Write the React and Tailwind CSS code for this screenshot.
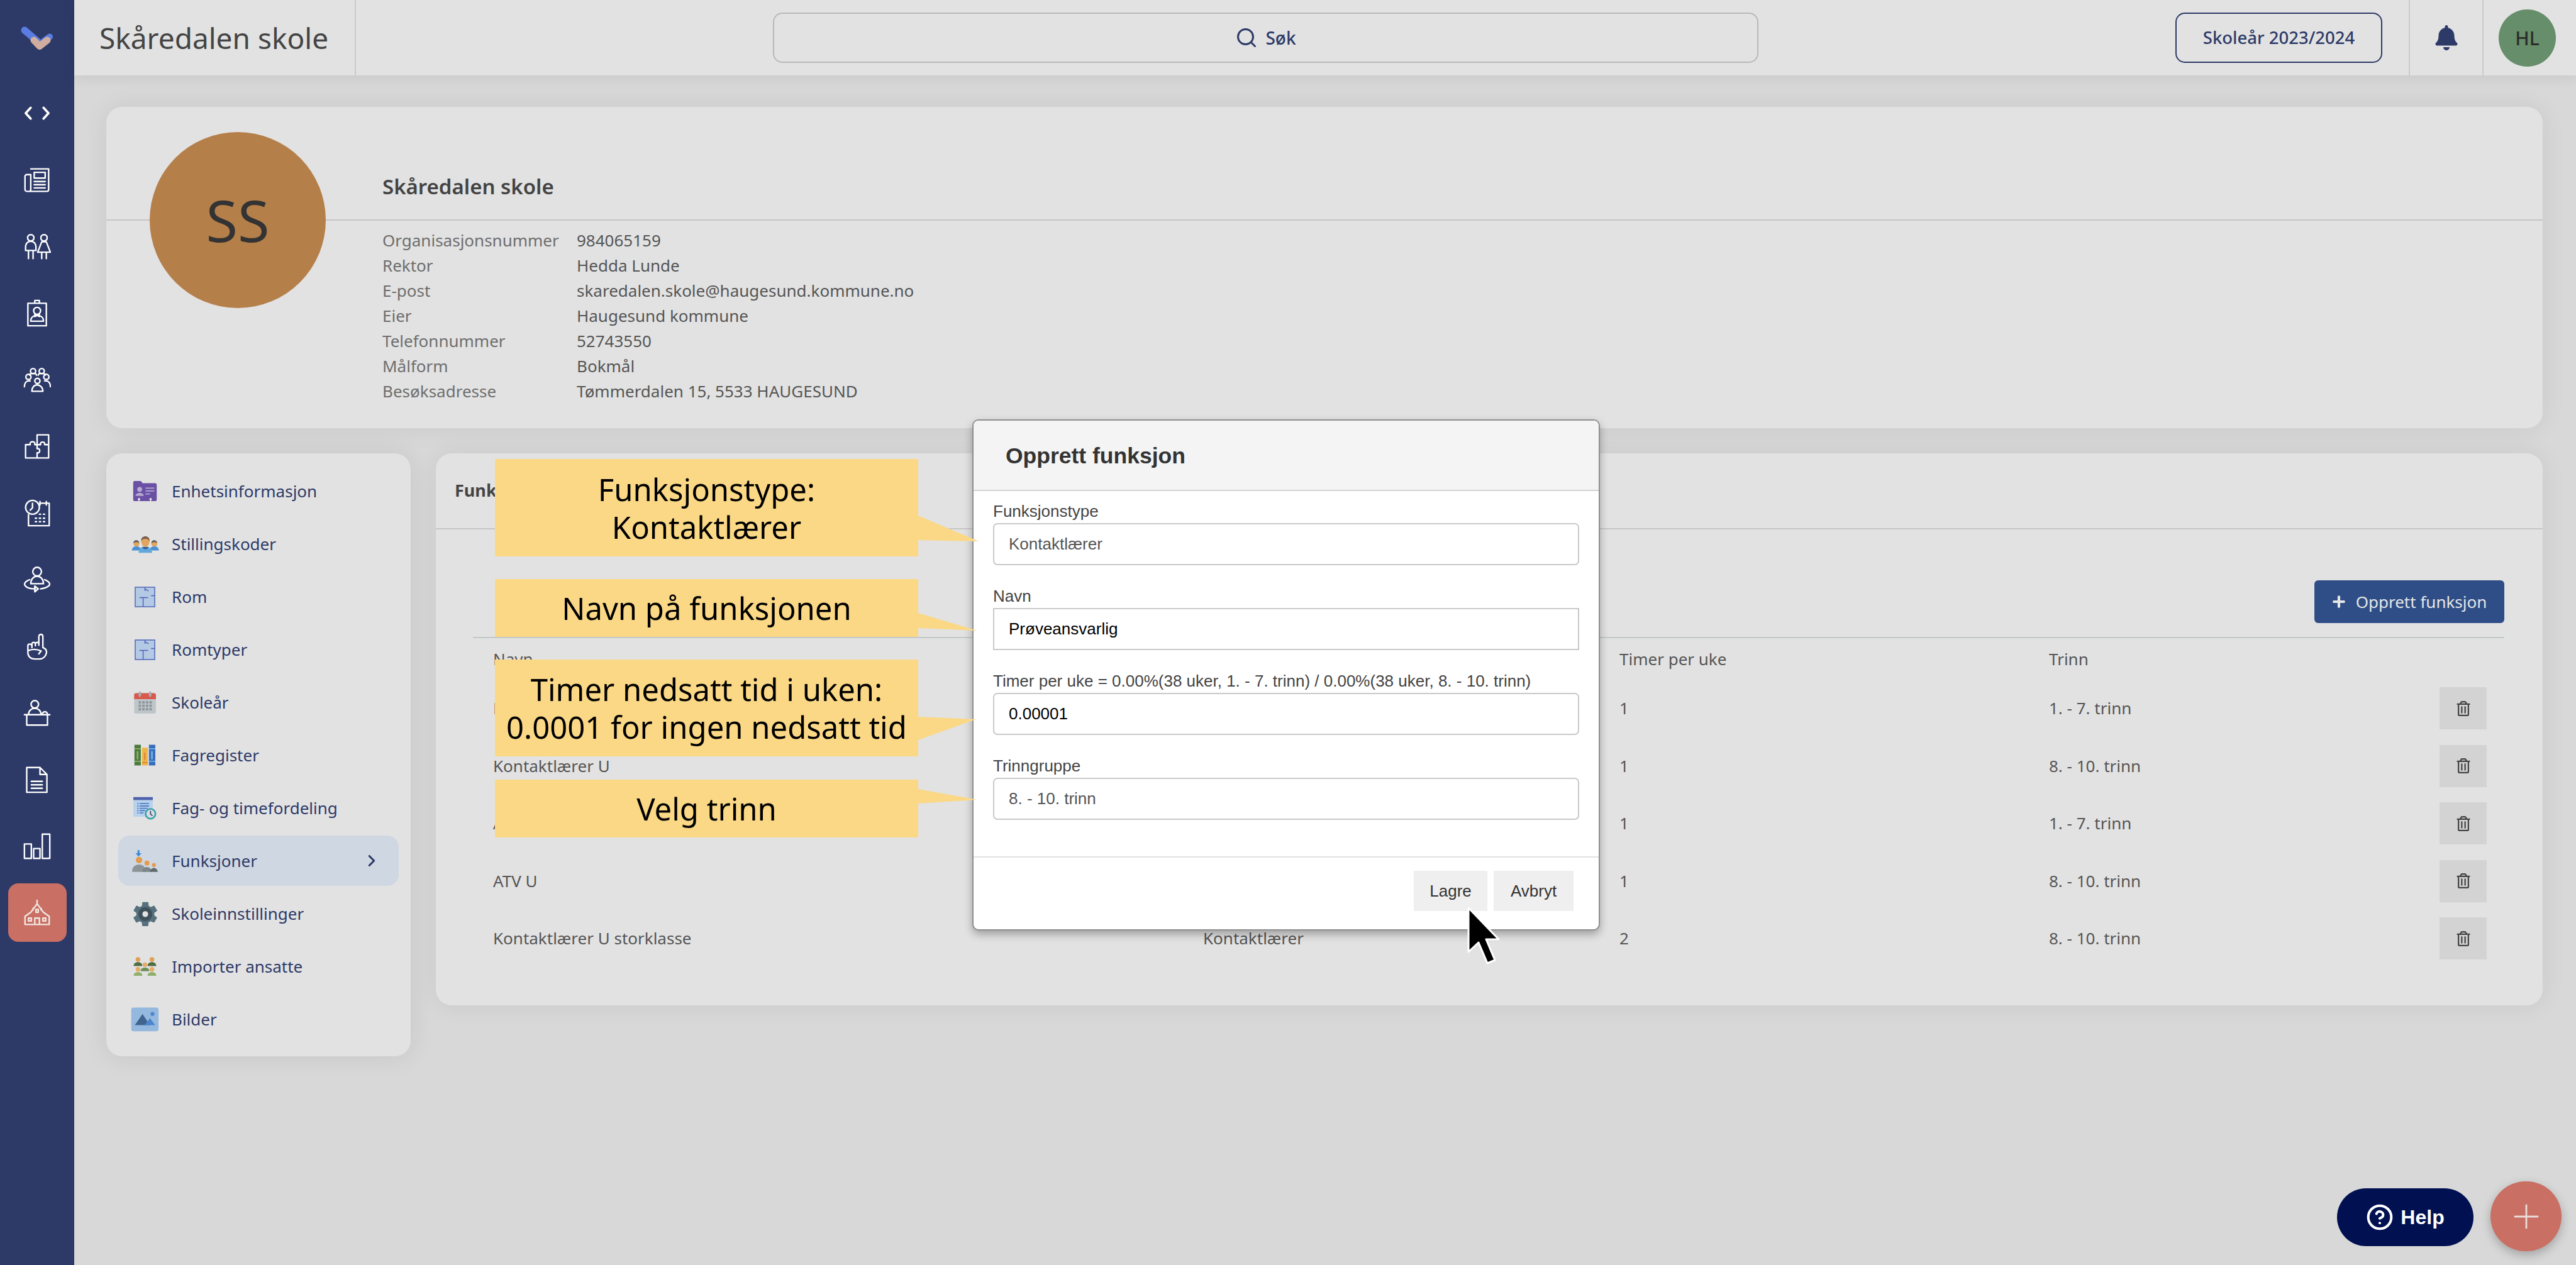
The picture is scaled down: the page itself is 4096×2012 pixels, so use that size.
import React from "react";
import { Search, ChevronRight, CircleHelp, Plus } from "lucide-react";
import { FaBell, FaPlus, FaRegTrashAlt } from "react-icons/fa";
import { FcSettings } from "react-icons/fc";

// white outline icons in the dark left rail
function RailIcon({ children }) {
  return (
    <svg viewBox="0 0 48 48" className="w-[44px] h-[44px]" fill="none" stroke="currentColor" strokeWidth="2.6" strokeLinejoin="round" strokeLinecap="round">
      {children}
    </svg>
  );
}

const railIcons = [
  <RailIcon><path d="M13 5h31v36a3 3 0 0 1-3 3H6a3 3 0 0 1-3-3V18a3 3 0 0 1 3-3h7M13 15v26a3 3 0 0 1-3 3" /><rect x="19" y="11" width="19" height="10" /><path d="M19 27h19M19 32.500h19M19 38h19" /></RailIcon>,
  <RailIcon><circle cx="13" cy="9" r="5.500" /><path d="M4 31v-7a9 9 0 0 1 18 0v7zM9 31v14M17 31v14" /><circle cx="36" cy="9" r="5.500" /><path d="M32 16h8l7 18H25zM32 34v11M40 34v11" /></RailIcon>,
  <RailIcon><path d="M8 7h32v39H8zM20 7V2h8v5" /><circle cx="24" cy="20" r="6" /><path d="M13 38c0-7 5-10 11-10s11 3 11 10zM20 26l8 4M28 26l-8 4" /></RailIcon>,
  <RailIcon><circle cx="17" cy="9" r="4.500" /><circle cx="32" cy="9" r="4.500" /><circle cx="9" cy="19" r="4.500" /><circle cx="40" cy="19" r="4.500" /><circle cx="24.500" cy="26" r="4.500" /><path d="M2 36c0-6 3-10 7-10h3M47 36c0-6-3-10-7-10h-3M11 16c0-2 2-3 6-3s6 1 6 3M26 16c0-2 2-3 6-3s6 1 6 3M15 44c0-7 4-11 9-11s10 4 10 11z" /></RailIcon>,
  <RailIcon><path d="M24 4h20v40H4V21h8c-2-7 10-7 8 0h4V4zM24 21v7c6-2 6 9 0 7v9M24 21h6c-2-6 9-6 7 0h7" /></RailIcon>,
  <RailIcon><circle cx="16" cy="14" r="12" /><path d="M16 7v8l-4 4M29 7h16v39H9V27" /><path d="M29 4v6M40 4v6M28 26h2M35 26h2M21 33h2M28 33h2M35 33h2M21 39h2M28 39h2M35 39h2" /></RailIcon>,
  <RailIcon><circle cx="24" cy="10" r="7.500" /><path d="M13 31c0-8 5-13 11-13s11 5 11 13zM11 24C3 27 1 31 3 34c3 4 11 6 18 6M37 24c8 3 10 7 8 10-3 3-8 5-15 6M20 35l6 5-6 5z" /></RailIcon>,
  <RailIcon><path d="M27 22V7c0-5 7-5 7 0v19c5 2 7 6 6 10-1 6-6 10-12 10h-8c-8 0-12-5-12-11V23c0-4 6-4 7 0v3M15 23v-3c0-4 6-4 6 0v3M21 20c0-4 6-4 6 0M10 31c8-3 14-2 21 1l-4 5" /></RailIcon>,
  <RailIcon><circle cx="20" cy="9" r="6.500" /><path d="M9 27c0-7 5-11 11-11s11 4 11 11M2 27h44M6 27v18h36V27M33 27c0-7 9-7 9 0" /></RailIcon>,
  <RailIcon><path d="M6 3h23l12 12v31H6zM29 3v12h12M14 27h19M14 33h19M14 39h19" /></RailIcon>,
  <RailIcon><path d="M2 20h12v25H2zM18 28h11v17H18zM33 3h13v42H33z" /></RailIcon>,
];

function IdCard() {
  return (
    <svg viewBox="55 65 148 128" className="w-[39px] h-[34px]">
      <path fill="#6a50a4" d="M68 68h32q8 0 14 14h76q10 0 10 10v88q0 10-10 10H68q-10 0-10-10V78q0-10 10-10z" />
      <circle cx="97" cy="119" r="15" fill="#b5a8d2" />
      <path fill="#b5a8d2" d="M72 158c0-11 11-18 25-18s25 7 25 18z" />
      <path fill="#b5a8d2" d="M132 108h53v7h-53zM132 125h53v7h-53zM132 143h28v7h-28z" />
      <circle cx="93" cy="178" r="7" fill="#e6e6e6" />
      <circle cx="163" cy="178" r="7" fill="#e6e6e6" />
      <path fill="#e6e6e6" d="M90 180h6v10h-6zM160 180h6v10h-6z" />
    </svg>
  );
}

function Staff() {
  const small = (x) => (
    <g key={x}>
      <path fill="#4a90d6" d={`M${x - 28} 490c2-18 14-26 28-26s26 8 28 26z`} />
      <circle cx={x} cy="448" r="18" fill="#e0a55e" />
      <path fill="#5f5a56" d={`M${x - 18} 446c-2-26 36-26 36 0-6-10-28-10-36 0z`} />
    </g>
  );
  return (
    <svg viewBox="40 395 175 112" className="w-[46px] h-[29px]">
      {small(73)}
      {small(183)}
      <path fill="#61a9dc" d="M87 504c0-28 16-38 41-38s41 10 41 38z" />
      <path fill="#2f5f9e" d="M108 468c6 18 34 18 40 0z" />
      <ellipse cx="128" cy="438" rx="24" ry="30" fill="#e0a55e" />
      <path fill="#7b5f4b" d="M102 436c-6-44 58-44 52 0-4-12-10-18-26-18s-22 6-26 18z" />
    </svg>
  );
}

function FloorPlan() {
  return (
    <svg viewBox="0 0 34 34" className="w-[33px] h-[33px]" fill="#b4c9e4" stroke="#4c63b6" strokeWidth="1.500">
      <rect x="1" y="1" width="32" height="32" />
      <path fill="none" d="M17 1v6M17 4l6 3M8 18h14M14 18v15M27 15h6" />
    </svg>
  );
}

function CalendarIcon() {
  const cells = [];
  for (let r = 0; r < 3; r++) {
    for (let c = 0; c < 4; c++) {
      cells.push(<rect key={`${r}-${c}`} x={89 + c * 22} y={107 + r * 21} width="15" height="15" fill="#8e979c" />);
    }
  }
  return (
    <svg viewBox="58 45 140 142" className="w-[37px] h-[37px]">
      <rect x="62" y="58" width="133" height="125" rx="12" fill="#bfc6ca" />
      <path fill="#d9594c" d="M62 95V70q0-12 12-12h109q12 0 12 12v25z" />
      <rect x="89" y="48" width="15" height="33" rx="7" fill="#a9afb3" />
      <rect x="152" y="48" width="15" height="33" rx="7" fill="#a9afb3" />
      {cells}
    </svg>
  );
}

function Books() {
  return (
    <svg viewBox="62 375 134 130" className="w-[35px] h-[34px]">
      <rect x="65" y="377" width="39" height="126" fill="#4d7a3e" />
      <path fill="#8bb163" d="M65 398h39v7H65zM65 474h39v7H65zM79 416h10v50H79z" />
      <rect x="111" y="395" width="35" height="108" fill="#eeb545" />
      <path fill="#e2803c" d="M111 482h35v7h-35zM124 426h8v44h-8z" />
      <rect x="153" y="377" width="39" height="126" fill="#3a6db8" />
      <path fill="#6fb0e8" d="M153 398h39v7h-39zM153 474h39v7h-39zM166 416h11v50h-11z" />
    </svg>
  );
}

function TimePlan() {
  return (
    <svg viewBox="58 690 142 140" className="w-[37px] h-[37px]">
      <rect x="58" y="692" width="119" height="120" fill="#b9d2ec" />
      <rect x="58" y="692" width="119" height="18" fill="#4f63ad" />
      <path fill="#4f7fc4" d="M82 728h8v7h-8zM96 728h58v7H96zM82 743h8v7h-8zM96 743h58v7H96zM82 757h8v7h-8zM96 757h50v7H96zM82 771h8v7h-8zM96 771h34v7H96zM82 785h8v7h-8zM96 785h24v7H96z" />
      <circle cx="163" cy="794" r="30" fill="#d9dde0" stroke="#3aa0aa" strokeWidth="10" />
      <path fill="none" stroke="#2d3a68" strokeWidth="6" d="M163 776v20l12 10" />
    </svg>
  );
}

function Funksjoner() {
  return (
    <svg viewBox="0 0 52 44" className="w-[41px] h-[35px]">
      <path fill="#3d8bdc" d="M11 0h4v6h4l-6 7-6-7h4z" />
      <circle cx="14" cy="20" r="6.500" fill="#e59a4c" />
      <circle cx="30" cy="26" r="5" fill="#e59a4c" />
      <circle cx="44" cy="30" r="4" fill="#e59a4c" />
      <path fill="#8c9498" d="M0 44c0-10 6-15 14-15s14 5 14 15z" />
      <path fill="#7c8589" d="M20 44c1-6 5-10 10-10s9 4 10 10z" />
      <path fill="#5f6a6e" d="M36 44c1-5 4-8 8-8s7 3 8 8z" />
    </svg>
  );
}

function Importer() {
  return (
    <svg viewBox="58 42 140 120" className="w-[37px] h-[32px]">
      <circle cx="86" cy="60" r="14" fill="#e0a055" />
      <circle cx="170" cy="60" r="14" fill="#e0a055" />
      <circle cx="128" cy="92" r="14" fill="#e5ab68" />
      <circle cx="86" cy="120" r="14" fill="#e5ab68" />
      <circle cx="170" cy="120" r="14" fill="#e5ab68" />
      <path fill="#4f6e3f" d="M60 100c0-16 11-24 26-24s26 8 26 24zM144 100c0-16 11-24 26-24s26 8 26 24z" />
      <path fill="#6f9058" d="M102 131c0-16 11-21 26-21s26 5 26 21z" />
      <path fill="#8eb06c" d="M60 159c0-16 11-22 26-22s26 6 26 22zM144 159c0-16 11-22 26-22s26 6 26 22z" />
    </svg>
  );
}

function PictureIcon() {
  return (
    <svg viewBox="42 346 172 150" className="w-[45px] h-[39px]">
      <rect x="44" y="348" width="167" height="145" rx="14" fill="#94b8de" />
      <circle cx="174" cy="387" r="12" fill="#4b86cf" />
      <path fill="#41648f" d="M66 456l47-69 45 69z" />
      <path fill="#4b86cf" d="M125 456l34-43 32 43z" />
    </svg>
  );
}

const menu = [
  { label: "Enhetsinformasjon", icon: <IdCard /> },
  { label: "Stillingskoder", icon: <Staff /> },
  { label: "Rom", icon: <FloorPlan /> },
  { label: "Romtyper", icon: <FloorPlan /> },
  { label: "Skoleår", icon: <CalendarIcon /> },
  { label: "Fagregister", icon: <Books /> },
  { label: "Fag- og timefordeling", icon: <TimePlan /> },
  { label: "Funksjoner", icon: <Funksjoner />, active: true },
  { label: "Skoleinnstillinger", icon: <FcSettings className="w-[44px] h-[44px] brightness-90" /> },
  { label: "Importer ansatte", icon: <Importer /> },
  { label: "Bilder", icon: <PictureIcon /> },
];

const info = [
  ["Organisasjonsnummer", "984065159"],
  ["Rektor", "Hedda Lunde"],
  ["E-post", "skaredalen.skole@haugesund.kommune.no"],
  ["Eier", "Haugesund kommune"],
  ["Telefonnummer", "52743550"],
  ["Målform", "Bokmål"],
  ["Besøksadresse", "Tømmerdalen 15, 5533 HAUGESUND"],
];

const rows = [
  ["Kontaktlærer B", "Kontaktlærer", "1", "1. - 7. trinn"],
  ["Kontaktlærer U", "Kontaktlærer", "1", "8. - 10. trinn"],
  ["ATV B", "Kontaktlærer", "1", "1. - 7. trinn"],
  ["ATV U", "Kontaktlærer", "1", "8. - 10. trinn"],
  ["Kontaktlærer U storklasse", "Kontaktlærer", "2", "8. - 10. trinn"],
];

const fields = [
  { label: "Funksjonstype", value: "Kontaktlærer", muted: true },
  { label: "Navn", value: "Prøveansvarlig", square: true },
  { label: "Timer per uke = 0.00%(38 uker, 1. - 7. trinn) / 0.00%(38 uker, 8. - 10. trinn)", value: "0.00001" },
  { label: "Trinngruppe", value: "8. - 10. trinn", muted: true },
];

const callouts = [
  { top: "top-[730px]", h: "h-[155px]", lines: ["Funksjonstype:", "Kontaktlærer"] },
  { top: "top-[921px]", h: "h-[92px]", lines: ["Navn på funksjonen"] },
  { top: "top-[1049px]", h: "h-[154px]", lines: ["Timer nedsatt tid i uken:", "0.0001 for ingen nedsatt tid"] },
  { top: "top-[1240px]", h: "h-[92px]", lines: ["Velg trinn"] },
];

function Modal() {
  return (
    <div className="absolute left-[1546px] top-[667px] w-[998px] h-[813px] bg-white rounded-[10px] border-2 border-[#8f8f8f] shadow-[0_6px_14px_rgba(0,0,0,0.3)] font-['Liberation_Sans',sans-serif] overflow-hidden flex flex-col">
      <div className="h-[112px] shrink-0 bg-[#f4f4f4] border-b-2 border-[#d4d4d4] flex items-center pl-[51px] pt-[3px] text-[35.500px] font-bold text-[#333]">
        Opprett funksjon
      </div>
      <div className="flex flex-col gap-[31px] pl-[31px] pt-[14px]">
        {fields.map((f) => (
          <div key={f.label} className="w-[932px]">
            <div className="h-[37px] flex items-center text-[26px] text-[#444] whitespace-nowrap">{f.label}</div>
            <div className={`h-[67px] border-2 border-[#c9c9c9] flex items-center pl-[23px] text-[26px] ${f.square ? "" : "rounded-[7px]"} ${f.muted ? "text-[#555]" : "text-black"}`}>
              {f.value}
            </div>
          </div>
        ))}
      </div>
      <div className="mt-auto h-[116px] border-t-2 border-[#e2e2e2] flex items-start justify-end gap-[10px] pt-[21px] pr-[40px]">
        <div className="w-[117px] h-[64px] bg-[#efefef] flex items-center justify-center text-[26px] text-[#333]">Lagre</div>
        <div className="w-[127px] h-[64px] bg-[#efefef] flex items-center justify-center text-[26px] text-[#333]">Avbryt</div>
      </div>
    </div>
  );
}

export default function App() {
  return (
    <div className="relative h-screen w-full overflow-hidden flex bg-[#d8d8d8] font-['Noto_Sans',sans-serif]">
      {/* left rail */}
      <aside className="w-[118px] shrink-0 bg-[#2d3a68] text-white flex flex-col items-center">
        <div className="h-[127px] w-full flex items-center justify-center pb-[5px]">
          <svg viewBox="0 0 104 76" className="w-[52px] h-[38px]" fill="none" strokeLinecap="round">
            <path d="M12 12 56 50" stroke="#5b7de2" strokeWidth="22" />
            <path d="M74 46 92 33" stroke="#5b7de2" strokeWidth="20" />
            <path d="M42 44 60 63 84 44" stroke="#d0ad9f" strokeWidth="22" strokeLinejoin="round" />
          </svg>
        </div>
        <div className="h-[106px] w-full flex items-center justify-center gap-[16px]">
          <svg viewBox="0 0 18 30" className="w-[13px] h-[22px]" fill="none" stroke="white" strokeWidth="5" strokeLinecap="round" strokeLinejoin="round"><path d="M15 3 4 15l11 12" /></svg>
          <svg viewBox="0 0 18 30" className="w-[13px] h-[22px]" fill="none" stroke="white" strokeWidth="5" strokeLinecap="round" strokeLinejoin="round"><path d="M3 3l11 12L3 27" /></svg>
        </div>
        {railIcons.map((icon, i) => (
          <div key={i} className="h-[106px] w-full flex items-center justify-center">{icon}</div>
        ))}
        <div className="w-[93px] h-[93px] mt-[6px] rounded-[16px] bg-[#c96f63] flex items-center justify-center text-[#f1e6e3]">
          <RailIcon><path d="M24 2v5M13 23 24 8l11 15M17 19v-3M31 19v-3M3 44V30l10-7M45 44V30l-10-7M3 44h42M20 44V33h8v11M9 33h5v5H9zM34 33h5v5h-5zM22 18h4v5h-4z" /></RailIcon>
        </div>
      </aside>

      <div className="flex-1 min-w-0 flex flex-col">
        {/* top bar */}
        <header className="h-[120px] shrink-0 bg-[#e2e2e2] flex shadow-[0_4px_20px_rgba(0,0,0,0.08)]">
          <div className="w-[448px] shrink-0 border-r-2 border-[#cbcbcb] flex items-center pl-[40px] text-[46px] text-[#444]">
            Skåredalen skole
          </div>
          <div className="flex-1 relative flex items-center">
            <div className="ml-[663px] w-[1567px] h-[80px] rounded-[15px] border-2 border-[#b8b8b8] flex items-center justify-center gap-[12px] text-[#2d3a68]">
              <Search size={36} strokeWidth={2} />
              <span className="text-[28px] font-medium">Søk</span>
            </div>
            <div className="ml-[663px] w-[329px] h-[80px] rounded-[15px] border-2 border-[#2d3a68] flex items-center justify-center text-[27.500px] font-medium text-[#2d3a68]">
              Skoleår 2023/2024
            </div>
          </div>
          <div className="w-[119px] shrink-0 border-x-2 border-[#cbcbcb] ml-[42px] flex items-center justify-center text-[#2d3a68]">
            <FaBell size={40} />
          </div>
          <div className="w-[147px] shrink-0 flex items-center pl-[24px]">
            <div className="w-[91px] h-[91px] rounded-full bg-[#678e6a] flex items-center justify-center text-[30px] font-medium text-[#2b2b2b]">HL</div>
          </div>
        </header>

        <main className="flex-1 pl-[51px] pr-[53px] pt-[50px] flex flex-col gap-[40px]">
          {/* school card */}
          <section className="relative h-[511px] shrink-0 rounded-[25px] bg-[#e2e2e2] shadow-[0_0_40px_rgba(0,0,0,0.07)]">
            <div className="h-[181px] border-b-2 border-[#c6c6c6] pl-[439px] pt-[104px] text-[33px] leading-[46px] font-semibold text-[#444]">
              Skåredalen skole
            </div>
            <div className="pl-[439px] pt-[11px] text-[26px] leading-[40px]">
              {info.map(([k, v]) => (
                <div key={k} className="flex">
                  <span className="w-[309px] shrink-0 text-[#6e6e6e]">{k}</span>
                  <span className="text-[#555]">{v}</span>
                </div>
              ))}
            </div>
            <div className="absolute left-[69px] top-[40px] w-[280px] h-[280px] rounded-full bg-[#b57f4a] flex items-center justify-center text-[92px] text-[#333]">
              SS
            </div>
          </section>

          <div className="flex items-start gap-[40px]">
            {/* side menu */}
            <nav className="w-[484px] h-[959px] shrink-0 rounded-[25px] bg-[#e2e2e2] pt-[18px] shadow-[0_0_40px_rgba(0,0,0,0.09)]">
              {menu.map((m) => (
                <div key={m.label} className="h-[84px] py-[2px] mx-[19px]">
                  <div className={`h-full rounded-[18px] flex items-center text-[26px] text-[#2d3a68] ${m.active ? "bg-[#cfd8e2]" : ""}`}>
                    <div className="w-[85px] shrink-0 flex justify-center">{m.icon}</div>
                    <span>{m.label}</span>
                    {m.active && <ChevronRight className="ml-auto mr-[28px]" size={30} strokeWidth={2.5} />}
                  </div>
                </div>
              ))}
            </nav>

            {/* functions panel */}
            <section className="flex-1 h-[878px] rounded-[25px] bg-[#e2e2e2] shadow-[0_0_40px_rgba(0,0,0,0.07)]">
              <div className="h-[121px] border-b-2 border-[#c6c6c6] flex items-center pl-[30px] text-[27px] font-bold text-[#444]">
                Funksjoner
              </div>
              <div className="pl-[59px] pr-[61px]">
                <div className="flex justify-end pt-[81px] pb-[22px]">
                  <div className="w-[302px] h-[68px] rounded-[6px] bg-[#2f4e87] flex items-center justify-center gap-[16px] text-[26px] text-[#e6e6e6]">
                    <FaPlus size={22} />
                    <span>Opprett funksjon</span>
                  </div>
                </div>
                <div className="border-t-2 border-[#c2c8c8] text-[26px] text-[#555]">
                  <div className="h-[66px] grid grid-cols-[1129px_662px_683px_1fr] items-center pl-[32px]">
                    <span>Navn</span>
                    <span>Funksjonstype</span>
                    <span>Timer per uke</span>
                    <span>Trinn</span>
                  </div>
                  {rows.map((r, i) => (
                    <div key={i} className="h-[91.500px] grid grid-cols-[1129px_662px_683px_1fr_75px] items-center pl-[32px] pr-[28px]">
                      <span>{r[0]}</span>
                      <span>{r[1]}</span>
                      <span>{r[2]}</span>
                      <span>{r[3]}</span>
                      <div className="w-[75px] h-[67px] bg-[#d3d3d3] flex items-center justify-center text-[#444]">
                        <FaRegTrashAlt size={24} />
                      </div>
                    </div>
                  ))}
                </div>
              </div>
            </section>
          </div>
        </main>
      </div>

      <Modal />

      {/* yellow notes with pointers */}
      <svg className="absolute left-[1460px] top-[800px] w-[100px] h-[500px]" viewBox="0 0 100 500" fill="#fbd886">
        <path d="M0 20 96 61 0 59z" />
        <path d="M0 175 94 203 0 199z" />
        <path d="M0 340 92 344 0 377z" />
        <path d="M0 455 94 472 0 478z" />
      </svg>
      {callouts.map((c) => (
        <div key={c.lines[0]} className={`absolute left-[787px] w-[673px] ${c.top} ${c.h} bg-[#fbd886] flex flex-col items-center justify-center text-[49px] leading-[60px] text-black`}>
          {c.lines.map((l) => (
            <div key={l} className="whitespace-nowrap">{l}</div>
          ))}
        </div>
      ))}

      {/* mouse pointer */}
      <svg className="absolute left-[2331px] top-[1440px] w-[56px] h-[96px]" viewBox="0 0 56 96">
        <path d="M4 4v70l16-15 14 33 12-5-14-33h20z" fill="black" stroke="white" strokeWidth="3" strokeLinejoin="round" />
      </svg>

      {/* floating buttons */}
      <div className="absolute left-[3716px] top-[1890px] w-[217px] h-[92px] rounded-full bg-[#001051] text-white flex items-center justify-center gap-[11px] font-['Liberation_Sans',sans-serif] font-bold text-[32px]">
        <CircleHelp size={44} strokeWidth={2.2} />
        <span>Help</span>
      </div>
      <div className="absolute left-[3960px] top-[1879px] w-[113px] h-[111px] rounded-full bg-[#c96f63] text-[#eadcd8] flex items-center justify-center shadow-[0_6px_16px_rgba(0,0,0,0.25)]">
        <Plus size={62} strokeWidth={1.1} />
      </div>
    </div>
  );
}
